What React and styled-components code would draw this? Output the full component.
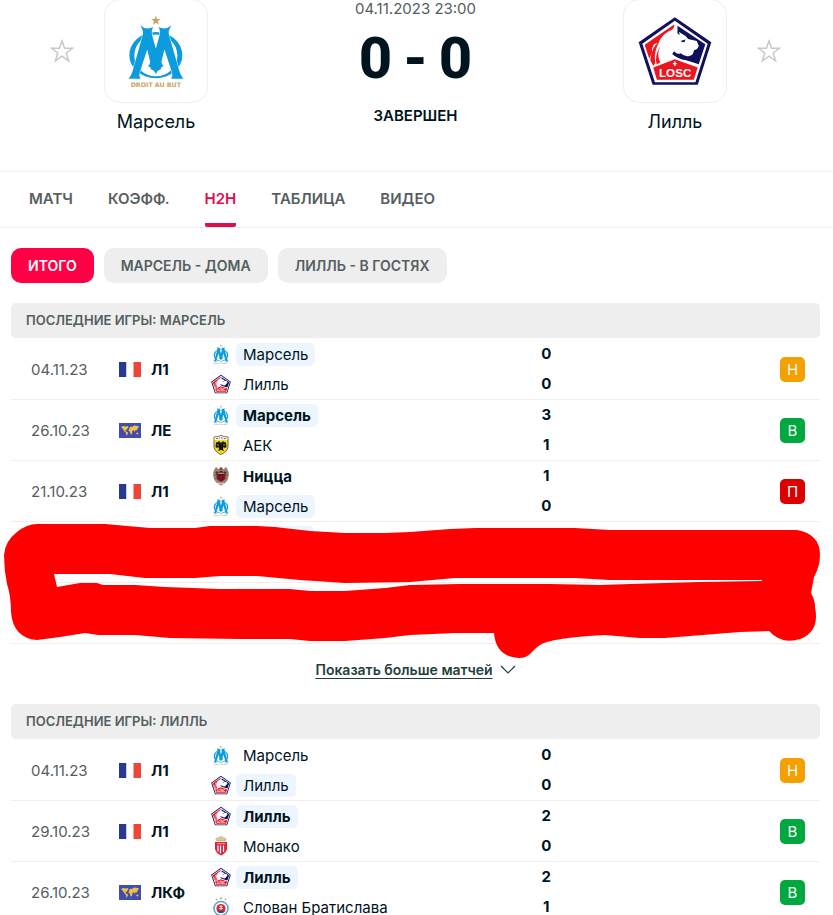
import React from "react";
import styled, { createGlobalStyle } from "styled-components";

const OmLogo = () => (
  <svg viewBox="260 42 175 221" aria-hidden="true">
    <path
      fill="#c9a45c"
      d="M347 46l4 10h10l-8 6 3 11-9-6-9 6 3-11-8-6h10z"
    />
    <path
      fill="#0c9bdc"
      fillRule="evenodd"
      d="M347 95A80 70 0 0 1 347 235A80 70 0 0 1 347 95ZM347 103A65 63 0 0 0 347 229A65 63 0 0 0 347 103Z"
    />
    <path
      fill="#0c9bdc"
      stroke="#fff"
      strokeWidth="3"
      paintOrder="stroke"
      d="M299 75Q318 91 339 80Q332 92 336 106L347 146L358 106Q362 92 355 80Q376 91 395 75Q382 92 387 106L418 213Q422 228 430 236H393Q399 228 396 218L373 148L364 185Q365 196 371 197Q362 200 361 208Q351 209 347 223Q343 209 333 208Q332 200 323 197Q329 196 330 185L321 148L298 218Q295 228 301 236H265Q273 228 277 213L307 106Q312 92 299 75Z"
    />
    <text
      x="347"
      y="260"
      fill="#c9a45c"
      fontFamily="DejaVu Sans, sans-serif"
      fontWeight="700"
      fontSize="19"
      textAnchor="middle"
    >
      DROIT AU BUT
    </text>
  </svg>
);

const LoscLogo = () => (
  <svg viewBox="85 49 223 208" aria-hidden="true">
    <path fill="#10105c" d="M196 51L306 127L265 255H129L87 127Z" />
    <path fill="#fff" d="M196 62L295 131L258 247H136L98 131Z" />
    <path
      fill="#ed1520"
      d="M105 134L194 73Q196 82 189 88Q160 99 146 128L133 133Q126 143 127 158L119 176Z"
    />
    <path fill="#ed1520" d="M151 123Q131 152 137 190L131 198L122 181Q124 143 151 123Z" />
    <path fill="#ed1520" d="M154 137Q139 160 152 188L141 194Q134 163 154 137Z" />
    <path
      fill="#10105c"
      d="M204 77L288 133L268 193L230 181Q204 177 188 162L194 154Q203 165 214 160Q224 171 240 168Q252 166 254 150Q264 150 268 137L262 123L236 117Q228 105 216 100L208 95L211 105L204 100Z"
    />
    <path fill="#10105c" d="M213 123l15-5-3 9-7-1z" />
    <path fill="#ed1520" d="M131 203L196 178L265 203L253 240H142Z" />
    <path fill="#fff" d="M194 185h4v4h4v4h-4v5h-4v-5h-4v-4h4z" />
    <text
      x="197"
      y="232"
      fill="#fff"
      fontFamily="Liberation Sans, sans-serif"
      fontWeight="700"
      fontSize="35"
      textAnchor="middle"
    >
      LOSC
    </text>
  </svg>
);

const AekLogo = () => (
  <svg viewBox="0 0 16 20" aria-hidden="true">
    <path
      d="M1 2Q5 2 8 .5Q11 2 15 2V12Q14 17 8 19.500Q2 17 1 12Z"
      fill="#f8dc1c"
      stroke="#444"
      strokeWidth=".8"
    />
    <path d="M1.500 2.400Q5 2.400 8 1Q11 2.400 14.500 2.400V5h-13z" fill="#f4f4f4" />
    <path d="M3 3.500h2M6 3h1M8 3h2M11 3.500h2" stroke="#555" strokeWidth=".8" />
    <path
      d="M8 8L6 6L5 7L3 7.500L2.500 12L4 13L5.500 12L6 14L5 16L8 15L11 16L10 14L10.500 12L12 13L13.500 12L13 7.500L11 7L10 6Z"
      fill="#171717"
    />
    <path d="M5 9v2M11 9v2M8 16v2" stroke="#f8dc1c" strokeWidth=".6" />
  </svg>
);

const NiceLogo = () => (
  <svg viewBox="0 0 16 20" aria-hidden="true">
    <path
      d="M5.500 3L3 1Q-.5 5 .3 10Q1 15 4 17L8 19.500L12 17Q15 15 15.700 10Q16.500 5 13 1L10.500 3Z"
      fill="#9a8570"
    />
    <path d="M1.500 6l1.500 1M1.200 9l2 1M2 12.500l1.500.5M14.500 6L13 7M14.800 9l-2 1M14 12.500l-1.500.5" stroke="#5c4a3d" strokeWidth=".7" />
    <path d="M3.500 5.500Q6 6.500 8 5Q10 6.500 12.500 5.500V12Q11.500 14.500 8 16Q4.500 14.500 3.500 12Z" fill="#8c1424" />
    <path d="M3.500 5.500Q6 6.500 8 5Q10 6.500 12.500 5.500V8.500h-9z" fill="#2a171b" />
    <path d="M6.300 8.500v6M9.700 8.500v6" stroke="#4a1620" />
    <path d="M4.500 7.200h7M5 17.300h6" stroke="#e6ddd2" strokeWidth=".9" />
    <path d="M6 3L8 .8L10 3L8 4.500z" fill="#b0322f" />
  </svg>
);

const MonacoLogo = () => (
  <svg viewBox="0 0 16 20" aria-hidden="true">
    <path
      d="M4 5Q1.500 3 4 2L6 1.500L8 .5L10 1.500L12 2Q14.500 3 12 5Z"
      fill="#dcc795"
      stroke="#a98a52"
      strokeWidth=".4"
    />
    <path d="M2 6H14V13Q13 17 8 19.500Q3 17 2 13Z" fill="#db2440" />
    <path d="M5 9.500v6M7.500 9.500v8M10.500 9.500v6.500" stroke="#fff" strokeWidth="1.200" />
    <path d="M4 7.700h8" stroke="#f5b8c1" strokeWidth=".8" />
  </svg>
);

const SlovanLogo = () => (
  <svg viewBox="0 0 16 20" aria-hidden="true">
    <path
      d="M3.500 1.500l1 1-1 1-1-1zM8 0l1.200 1.200L8 2.400 6.800 1.200zM12.500 1.500l1 1-1 1-1-1z"
      fill="#b99a63"
    />
    <circle cx="8" cy="11.500" r="7" fill="#fff" stroke="#5ba7ce" strokeWidth="1.600" />
    <circle cx="8" cy="11.500" r="4.600" fill="#e0272f" />
    <path d="M4 14h8l-2 2H6z" fill="#23558c" />
    <path d="M8 8v5M6.500 9.500h3M6 11.500h4" stroke="#fff" strokeWidth=".8" />
  </svg>
);

const FranceFlag = () => (
  <svg width="22" height="15" viewBox="0 0 22 15" aria-hidden="true">
    <path fill="#283a90" d="M0 0h7.500v15H0z" />
    <path fill="#fff" d="M7.500 0h7v15h-7z" />
    <path fill="#f04438" d="M14.500 0H22v15h-7.500z" />
  </svg>
);

const WorldFlag = () => (
  <svg width="22" height="15" viewBox="0 0 22 15" aria-hidden="true">
    <path fill="#3f4db0" d="M0 0h22v15H0z" />
    <path
      fill="#f2c043"
      d="M2 4l2-1 3 .5 2-.5.5 1.500L8 6 7 7.500 6 7l1 1.500L8.500 9l.5 1.500L7.500 13 7 10 5.500 8.500 4 6zM10.500 5l1-1.500L13 4l2-1.500 4 .5 1 1-1.500 1.500L18 7.500 16.500 7l-.5 2-1.500-2-1 1-.5 3-1.500.5-.5-3-1.500-.5.5-2zM17 10l2-.5.5 1.500-1.500.5z"
    />
  </svg>
);

const Star = () => (
  <svg width="24" height="24" viewBox="0 0 24 24" aria-hidden="true">
    <path
      fill="none"
      stroke="#c3caca"
      strokeWidth="1.500"
      d="M12 2L14.600 9.300H22.500L16.200 14L18.600 21.800L12 17.200L5.400 21.800L7.800 14L1.500 9.300H9.400Z"
    />
  </svg>
);

const clubs = {
  om: { name: "Марсель", Logo: OmLogo },
  losc: { name: "Лилль", Logo: LoscLogo },
  aek: { name: "АЕК", Logo: AekLogo },
  nice: { name: "Ницца", Logo: NiceLogo },
  monaco: { name: "Монако", Logo: MonacoLogo },
  slovan: { name: "Слован Братислава", Logo: SlovanLogo },
};

const marseilleGames = [
  { date: "04.11.23", flag: "fr", league: "Л1", home: "om", away: "losc", score: [0, 0], result: "Н" },
  { date: "26.10.23", flag: "world", league: "ЛЕ", home: "om", away: "aek", score: [3, 1], result: "В" },
  { date: "21.10.23", flag: "fr", league: "Л1", home: "nice", away: "om", score: [1, 0], result: "П" },
];

const lilleGames = [
  { date: "04.11.23", flag: "fr", league: "Л1", home: "om", away: "losc", score: [0, 0], result: "Н" },
  { date: "29.10.23", flag: "fr", league: "Л1", home: "losc", away: "monaco", score: [2, 0], result: "В" },
  { date: "26.10.23", flag: "world", league: "ЛКФ", home: "losc", away: "slovan", score: [2, 1], result: "В" },
];

const tabs = ["МАТЧ", "КОЭФФ.", "H2H", "ТАБЛИЦА", "ВИДЕО"];
const filters = ["ИТОГО", "МАРСЕЛЬ - ДОМА", "ЛИЛЛЬ - В ГОСТЯХ"];

const Team = ({ id, away }) => {
  const { name, Logo } = clubs[id];
  return (
    <STeam $away={away}>
      <FavButton type="button" aria-label={name}>
        <Star />
      </FavButton>
      <TeamCard>
        <TeamLogo $wide={id === "losc"}>
          <Logo />
        </TeamLogo>
        <TeamName>{name}</TeamName>
      </TeamCard>
    </STeam>
  );
};

const Club = ({ id, selected, winner }) => {
  const { name, Logo } = clubs[id];
  return (
    <ClubLine>
      <ClubIcon>
        <Logo />
      </ClubIcon>
      <ClubName $selected={selected} $winner={winner}>
        {name}
      </ClubName>
    </ClubLine>
  );
};

const GameRow = ({ game, club }) => {
  const [homeScore, awayScore] = game.score;
  return (
    <Row>
      <DateCell>{game.date}</DateCell>
      <Cell>
        <League>
          {game.flag === "fr" ? <FranceFlag /> : <WorldFlag />}
          {game.league}
        </League>
      </Cell>
      <Cell>
        <Club id={game.home} selected={game.home === club} winner={homeScore > awayScore} />
        <Club id={game.away} selected={game.away === club} winner={awayScore > homeScore} />
      </Cell>
      <ScoreCell>
        <Goals>{homeScore}</Goals>
        <Goals>{awayScore}</Goals>
      </ScoreCell>
      <ResultCell>
        <Result $type={game.result}>{game.result}</Result>
      </ResultCell>
    </Row>
  );
};

const CoveredRow = () => (
  <Row>
    <Cell colSpan="2" />
    <CoveredCell>
      <ClubLine>
        <ClubIcon />
        <EmptyName />
      </ClubLine>
    </CoveredCell>
    <Cell colSpan="2" />
  </Row>
);

const Games = ({ title, games, club, covered }) => (
  <section>
    <SectionTitle>{title}</SectionTitle>
    <TableWrap>
      <Table>
        <colgroup>
          <col className="date" />
          <col className="league" />
          <col className="clubs" />
          <col className="score" />
          <col />
        </colgroup>
        <tbody>
          {games.map((game) => (
            <GameRow key={game.date} game={game} club={club} />
          ))}
          {covered && (
            <>
              <CoveredRow />
              <CoveredRow />
            </>
          )}
        </tbody>
      </Table>
      {covered && (
        <Scribble viewBox="0 520 833 140" preserveAspectRatio="none" aria-hidden="true">
          <path
            fill="#f00"
            fillRule="evenodd"
            d="M4 555Q5 541 17 532Q27 524 37 524H105L150 528H195L210 526H257L275 527L310 531L345 533H385L410 532L450 529L475 528H575L610 530H797Q820 534 820 555Q820 566 814 577L811 593Q815 600 815 607Q820 632 800 639Q782 645 769 631L740 632L690 636L665 638H640L605 635Q550 638 540 645C531 651 530 658 519 658Q496 657 494 633H455L410 635L385 638L345 641H310L290 639H240L170 638L135 635H98L85 633L60 637L37 640Q13 638 11 612Q11 596 7 584Q4 570 4 555ZM54 574H110L145 578H195L220 576H257L300 580L345 583L410 582L455 578H575L610 580H762V581L700 582L630 584L600 585L550 584H460L410 585L385 588L345 591H310L290 589H220L165 587L135 585H103L97 583H80L57 587Z"
          />
        </Scribble>
      )}
    </TableWrap>
  </section>
);

export default function App() {
  return (
    <>
      <GlobalStyle />
      <Header>
        <Team id="om" />
        <Status>
          <StartTime>04.11.2023 23:00</StartTime>
          <BigScore>
            <span>0</span>
            <span>-</span>
            <span>0</span>
          </BigScore>
          <Stage>ЗАВЕРШЕН</Stage>
        </Status>
        <Team id="losc" away />
      </Header>
      <Tabs>
        {tabs.map((tab) => (
          <Tab key={tab} href="#" $active={tab === "H2H"}>
            {tab}
          </Tab>
        ))}
      </Tabs>
      <Main>
        <Filters>
          {filters.map((filter) => (
            <Filter key={filter} type="button" $active={filter === "ИТОГО"}>
              {filter}
            </Filter>
          ))}
        </Filters>
        <Games title="ПОСЛЕДНИЕ ИГРЫ: МАРСЕЛЬ" games={marseilleGames} club="om" covered />
        <More>
          <MoreLink href="#">Показать больше матчей</MoreLink>
          <svg width="16" height="10" viewBox="0 0 16 10" aria-hidden="true">
            <path d="M1 1L8 8L15 1" fill="none" stroke="#1f3f3c" strokeWidth="1.200" />
          </svg>
        </More>
        <Games title="ПОСЛЕДНИЕ ИГРЫ: ЛИЛЛЬ" games={lilleGames} club="losc" />
      </Main>
    </>
  );
}

const GlobalStyle = createGlobalStyle`
  * {
    box-sizing: border-box;
  }
  html {
    overflow-x: hidden;
    scrollbar-width: none;
  }
  body {
    margin: 0;
    background: #fff;
    color: #00141e;
    font-family: Inter, "Liberation Sans", sans-serif;
    font-size: 15px;
  }
  button {
    border: 0;
    font-family: inherit;
    cursor: pointer;
  }
`;

const Header = styled.header`
  display: flex;
  justify-content: space-between;
  padding: 0 52px 37px 50px;
  border-bottom: 1px solid #eee;
`;

const STeam = styled.div`
  display: flex;
  flex-direction: ${(p) => (p.$away ? "row-reverse" : "row")};
  align-items: flex-start;
  gap: 30px;
`;

const FavButton = styled.button`
  display: flex;
  margin-top: 39px;
  padding: 0;
  width: 24px;
  background: none;
`;

const TeamCard = styled.div`
  display: flex;
  flex-direction: column;
  align-items: center;
  width: 104px;
`;

const TeamLogo = styled.div`
  display: flex;
  align-items: center;
  justify-content: center;
  width: 104px;
  height: 104px;
  margin-top: -1px;
  border: 1px solid #eee;
  border-radius: 16px;

  svg {
    width: ${(p) => (p.$wide ? "74px" : "58px")};
    height: 74px;
  }
`;

const TeamName = styled.div`
  margin-top: 7px;
  font-size: 18px;
  line-height: 24px;
`;

const Status = styled.div`
  display: flex;
  flex-direction: column;
  align-items: center;
`;

const StartTime = styled.div`
  color: #555e61;
  line-height: 18px;
`;

const BigScore = styled.div`
  display: flex;
  gap: 11px;
  margin-top: 10px;
  font-family: Roboto, sans-serif;
  font-size: 58px;
  font-weight: 800;
  line-height: 60px;
`;

const Stage = styled.div`
  margin-top: 18px;
  font-weight: 600;
  line-height: 20px;
`;

const Tabs = styled.nav`
  display: flex;
  gap: 35px;
  height: 56px;
  padding-left: 29px;
  border-bottom: 1px solid #eee;
`;

const Tab = styled.a`
  padding-top: 17px;
  border-bottom: 4px solid ${(p) => (p.$active ? "#dc0f4b" : "transparent")};
  border-radius: 2px;
  color: ${(p) => (p.$active ? "#dc0f4b" : "#555e61")};
  font-size: 15px;
  font-weight: 600;
  line-height: 20px;
  text-decoration: none;
`;

const Main = styled.main`
  padding: 20px 13px 0 11px;
`;

const Filters = styled.div`
  display: flex;
  gap: 10px;
  margin-bottom: 20px;
`;

const Filter = styled.button`
  height: 35px;
  padding: 0 17px;
  border-radius: 10px;
  background: ${(p) => (p.$active ? "#ff0046" : "#eee")};
  color: ${(p) => (p.$active ? "#fff" : "#555e61")};
  font-size: 14px;
  font-weight: 600;
`;

const SectionTitle = styled.h2`
  margin: 0 0 1px;
  padding-left: 15px;
  border-radius: 5px;
  background: #eee;
  color: #555e61;
  font-size: 13px;
  font-weight: 600;
  line-height: 35px;
`;

const TableWrap = styled.div`
  position: relative;
`;

const Table = styled.table`
  width: 100%;
  border-collapse: separate;
  border-spacing: 0;
  table-layout: fixed;

  .date {
    width: 108px;
  }
  .league {
    width: 92px;
  }
  .clubs {
    width: 37%;
  }
  .score {
    width: 72px;
  }
`;

const Row = styled.tr`
  height: 61px;
`;

const Cell = styled.td`
  padding: 0;
  border-bottom: 1px solid #eee;
  vertical-align: middle;
`;

const CoveredCell = styled(Cell)`
  vertical-align: top;
`;

const DateCell = styled(Cell)`
  padding-left: 20px;
  color: #555e61;
`;

const League = styled.div`
  display: flex;
  align-items: center;
  gap: 10px;
  font-weight: 700;
`;

const ClubLine = styled.div`
  display: flex;
  align-items: center;
  gap: 5px;
  height: 30px;
`;

const ClubIcon = styled.span`
  display: flex;
  width: 20px;
  height: 20px;

  svg {
    width: 20px;
    height: 20px;
  }
`;

const ClubName = styled.span`
  padding: 0 7px;
  border-radius: 5px;
  background: ${(p) => (p.$selected ? "#edf6ff" : "none")};
  font-weight: ${(p) => (p.$winner ? 700 : 400)};
  line-height: 23px;
`;

const EmptyName = styled.span`
  width: 78px;
  height: 23px;
  border-radius: 5px;
  background: #edf6ff;
`;

const ScoreCell = styled(Cell)`
  text-align: center;
  font-weight: 700;
`;

const Goals = styled.div`
  line-height: 30px;
`;

const ResultCell = styled(Cell)`
  padding-right: 15px;
`;

const resultColors = { Н: "#f3a000", В: "#00a83f", П: "#dc0000" };

const Result = styled.span`
  display: block;
  width: 25px;
  margin-left: auto;
  border-radius: 5px;
  background: ${(p) => resultColors[p.$type]};
  color: #fff;
  line-height: 25px;
  text-align: center;
`;

const Scribble = styled.svg`
  position: absolute;
  left: -11px;
  bottom: -16px;
  width: calc(100% + 24px);
  height: 140px;
  pointer-events: none;
`;

const More = styled.div`
  display: flex;
  align-items: center;
  justify-content: center;
  gap: 7px;
  height: 60px;
  padding-bottom: 9px;
`;

const MoreLink = styled.a`
  color: #1f3f3c;
  font-size: 14px;
  font-weight: 600;
  text-underline-offset: 3px;
`;
